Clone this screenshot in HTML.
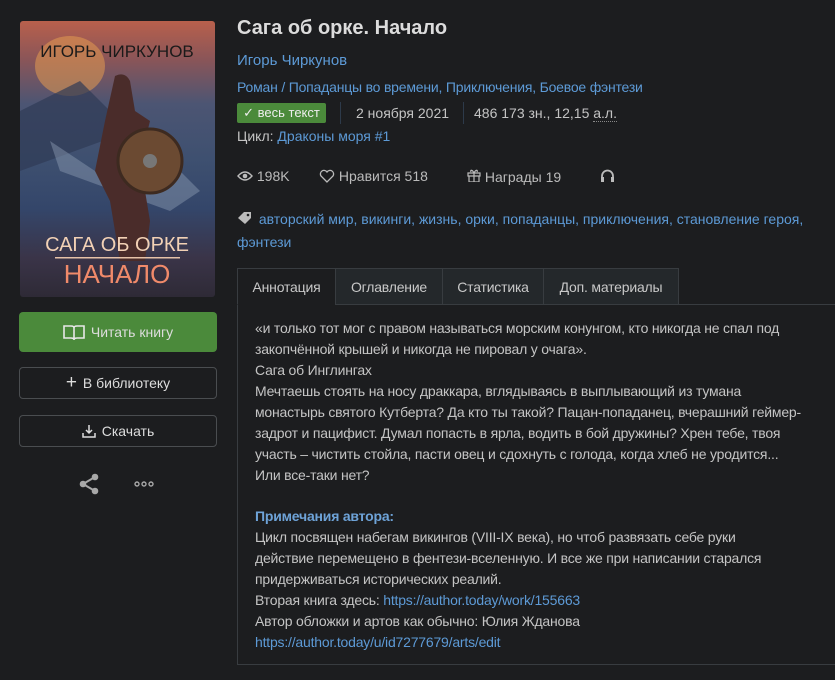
<!DOCTYPE html>
<html><head><meta charset="utf-8"><style>
*{box-sizing:border-box;margin:0;padding:0}
body{width:835px;height:680px;overflow:hidden;background:#1c1d1f;font-family:"Liberation Sans",sans-serif;color:#c4c4c4;font-size:14px;position:relative}
a{color:#5d9ad6;text-decoration:none}
.abs{position:absolute;white-space:nowrap}
.cover{position:absolute;left:20px;top:21px;width:195px;height:276px;border-radius:3px;overflow:hidden;
background:linear-gradient(180deg,#b8604c 0%,#8a5558 14%,#4c5573 30%,#3e5070 50%,#34466a 68%,#3a3448 86%,#2e2a36 100%)}
.btn{position:absolute;left:19px;width:198px;border-radius:4px;display:flex;align-items:center;justify-content:center;font-size:14px;color:#ddd}
.tab{position:absolute;top:268px;height:37px;display:flex;align-items:center;justify-content:center;background:#24282b;border:1px solid #383c40;color:#c8c8c8;font-size:14px;letter-spacing:-0.2px}
.p{position:absolute;left:255px;font-size:14px;line-height:21px;white-space:nowrap;letter-spacing:-0.2px}
</style></head><body>
<div class="cover">
 <svg width="195" height="276" viewBox="0 0 195 276">
  <ellipse cx="50" cy="45" rx="35" ry="30" fill="#e49a50" opacity=".55"/>
  <path d="M0 90 L60 60 L110 110 L0 150Z" fill="#2f3a55" opacity=".7"/>
  <path d="M30 120 L90 160 L150 140 L180 170 L150 190 L40 150Z" fill="#8f9db4" opacity=".45"/>
  <path d="M95 55 q10-5 15 5 l5 30 l15 10 l-10 40 l10 60 l-5 40 l-25 0 l-10-60 l-15-30 l10-50z" fill="#4a2c2a"/>
  <circle cx="130" cy="140" r="32" fill="#6b4a32" stroke="#3d2a20" stroke-width="3"/>
  <circle cx="130" cy="140" r="7" fill="#777"/>
  <text x="97" y="36" text-anchor="middle" font-size="17" fill="#1a1a1a" font-family="Liberation Sans">ИГОРЬ ЧИРКУНОВ</text>
  <text x="97" y="230" text-anchor="middle" font-size="20" fill="#f2d1b5" font-family="Liberation Sans">САГА ОБ ОРКЕ</text>
  <rect x="35" y="236" width="125" height="1.5" fill="#e6c2a8"/>
  <text x="97" y="262" text-anchor="middle" font-size="26" fill="#f08a6a" font-family="Liberation Sans">НАЧАЛО</text>
 </svg>
</div>
<div class="btn" style="top:312px;height:40px;background:#4b8a3b;">
 <svg width="22" height="16" viewBox="0 0 22 16" style="margin-right:6px"><path d="M1 2h7q3 0 3 2v11q-1-1-3-1H1z M21 2h-7q-3 0-3 2v11q1-1 3-1h7z" fill="none" stroke="#e8e8e8" stroke-width="1.6"/></svg>Читать книгу</div>
<div class="btn" style="top:367px;height:32px;border:1px solid #4a4d50;"><span style="font-size:19px;margin-right:6px;font-weight:300">+</span>В библиотеку</div>
<div class="btn" style="top:415px;height:32px;border:1px solid #4a4d50;">
 <svg width="14" height="14" viewBox="0 0 14 14" style="margin-right:6px"><path d="M7 1v8M4 6l3 3 3-3M1 9v4h12V9" fill="none" stroke="#ddd" stroke-width="1.5"/></svg>Скачать</div>
<svg class="abs" style="left:79px;top:473px" width="22" height="22" viewBox="0 0 22 22"><circle cx="16" cy="4" r="3.3" fill="#a8a8a8"/><circle cx="4" cy="11" r="3.3" fill="#a8a8a8"/><circle cx="16" cy="18" r="3.3" fill="#a8a8a8"/><path d="M16 4L4 11L16 18" stroke="#a8a8a8" stroke-width="2" fill="none"/></svg>
<svg class="abs" style="left:134px;top:480px" width="20" height="8"><circle cx="3" cy="4" r="2" fill="none" stroke="#a8a8a8" stroke-width="1.4"/><circle cx="10" cy="4" r="2" fill="none" stroke="#a8a8a8" stroke-width="1.4"/><circle cx="17" cy="4" r="2" fill="none" stroke="#a8a8a8" stroke-width="1.4"/></svg>

<div class="abs" style="left:237px;top:17px;font-size:20px;font-weight:bold;color:#dcdcdc">Сага об орке. Начало</div>
<div class="abs" style="left:237px;top:52px;font-size:15px"><a>Игорь Чиркунов</a></div>
<div class="abs" style="left:237px;top:79px;font-size:14px;letter-spacing:-0.2px"><a>Роман / Попаданцы во времени, Приключения, Боевое фэнтези</a></div>
<div class="abs" style="left:237px;top:103px;height:20px;width:89px;background:#4b8a3b;border-radius:2px;color:#eee;font-size:13px;display:flex;align-items:center;justify-content:center">✓&nbsp;весь текст</div>
<div class="abs" style="left:340px;top:102px;width:1px;height:22px;background:#2d3a4a"></div>
<div class="abs" style="left:356px;top:105px;font-size:14px">2 ноября 2021</div>
<div class="abs" style="left:463px;top:102px;width:1px;height:22px;background:#2d3a4a"></div>
<div class="abs" style="left:474px;top:105px;font-size:14px">486 173 зн., 12,15 <span style="border-bottom:1px dotted #888">а.л.</span></div>
<div class="abs" style="left:237px;top:128px;font-size:14px">Цикл: <a>Драконы моря #1</a></div>

<div class="abs" style="left:237px;top:168px;font-size:14px;color:#bbb">
 <svg width="16" height="12" viewBox="0 0 16 12" style="vertical-align:-1px"><path d="M1 6q7-8 14 0q-7 8-14 0z" fill="none" stroke="#bbb" stroke-width="1.4"/><circle cx="8" cy="6" r="2.3" fill="#bbb"/></svg> 198K</div>
<div class="abs" style="left:319px;top:168px;font-size:14px;color:#bbb"><svg width="16" height="14" viewBox="0 0 16 14" style="vertical-align:-2px"><path d="M8 13L2 7a3.4 3.4 0 0 1 6-4a3.4 3.4 0 0 1 6 4z" fill="none" stroke="#bbb" stroke-width="1.3"/></svg> Нравится 518</div>
<div class="abs" style="left:467px;top:168px;font-size:14px;color:#bbb"><svg width="14" height="14" viewBox="0 0 14 14"><path d="M1 5h12v3H1zM2 8h10v6H2zM7 5v9M7 5C5 1 3 2 4 4M7 5C9 1 11 2 10 4" fill="none" stroke="#bbb" stroke-width="1.2"/></svg> Награды 19</div>
<svg class="abs" style="left:600px;top:169px" width="15" height="14" viewBox="0 0 15 14"><path d="M2 11V7a5.5 5.5 0 0 1 11 0v4" fill="none" stroke="#bbb" stroke-width="1.8"/><rect x="1" y="8" width="3" height="5" fill="#bbb"/><rect x="11" y="8" width="3" height="5" fill="#bbb"/></svg>

<div class="abs" style="left:237px;top:208px;font-size:14px;line-height:23px;white-space:normal;width:590px"><svg width="18" height="14" viewBox="0 0 18 14" style="vertical-align:-1px"><path d="M1 7l6-6h7v6l-6 6z" fill="#bbb"/><circle cx="11" cy="4" r="1.3" fill="#1c1d1f"/></svg> <a>авторский мир, викинги, жизнь, орки, попаданцы, приключения, становление героя, фэнтези</a></div>

<div class="abs" style="left:237px;top:304px;width:600px;height:361px;border:1px solid #383c40"></div>
<div class="tab" style="left:237px;width:99px;background:#1c1d1f;border-bottom-color:#1c1d1f">Аннотация</div>
<div class="tab" style="left:335px;width:108px">Оглавление</div>
<div class="tab" style="left:442px;width:102px">Статистика</div>
<div class="tab" style="left:543px;width:136px">Доп. материалы</div>

<div class="p" style="top:318px">«и только тот мог с правом называться морским конунгом, кто никогда не спал под<br>закопчённой крышей и никогда не пировал у очага».<br>Сага об Инглингах<br>Мечтаешь стоять на носу драккара, вглядываясь в выплывающий из тумана<br>монастырь святого Кутберта? Да кто ты такой? Пацан-попаданец, вчерашний геймер-<br>задрот и пацифист. Думал попасть в ярла, водить в бой дружины? Хрен тебе, твоя<br>участь – чистить стойла, пасти овец и сдохнуть с голода, когда хлеб не уродится...<br>Или все-таки нет?</div>
<div class="p" style="top:506px"><b style="color:#6ea3d8">Примечания автора:</b><br>Цикл посвящен набегам викингов (VIII-IX века), но чтоб развязать себе руки<br>действие перемещено в фентези-вселенную. И все же при написании старался<br>придерживаться исторических реалий.<br>Вторая книга здесь: <a>https://author.today/work/155663</a><br>Автор обложки и артов как обычно: Юлия Жданова<br><a>https://author.today/u/id7277679/arts/edit</a></div>
</body></html>
